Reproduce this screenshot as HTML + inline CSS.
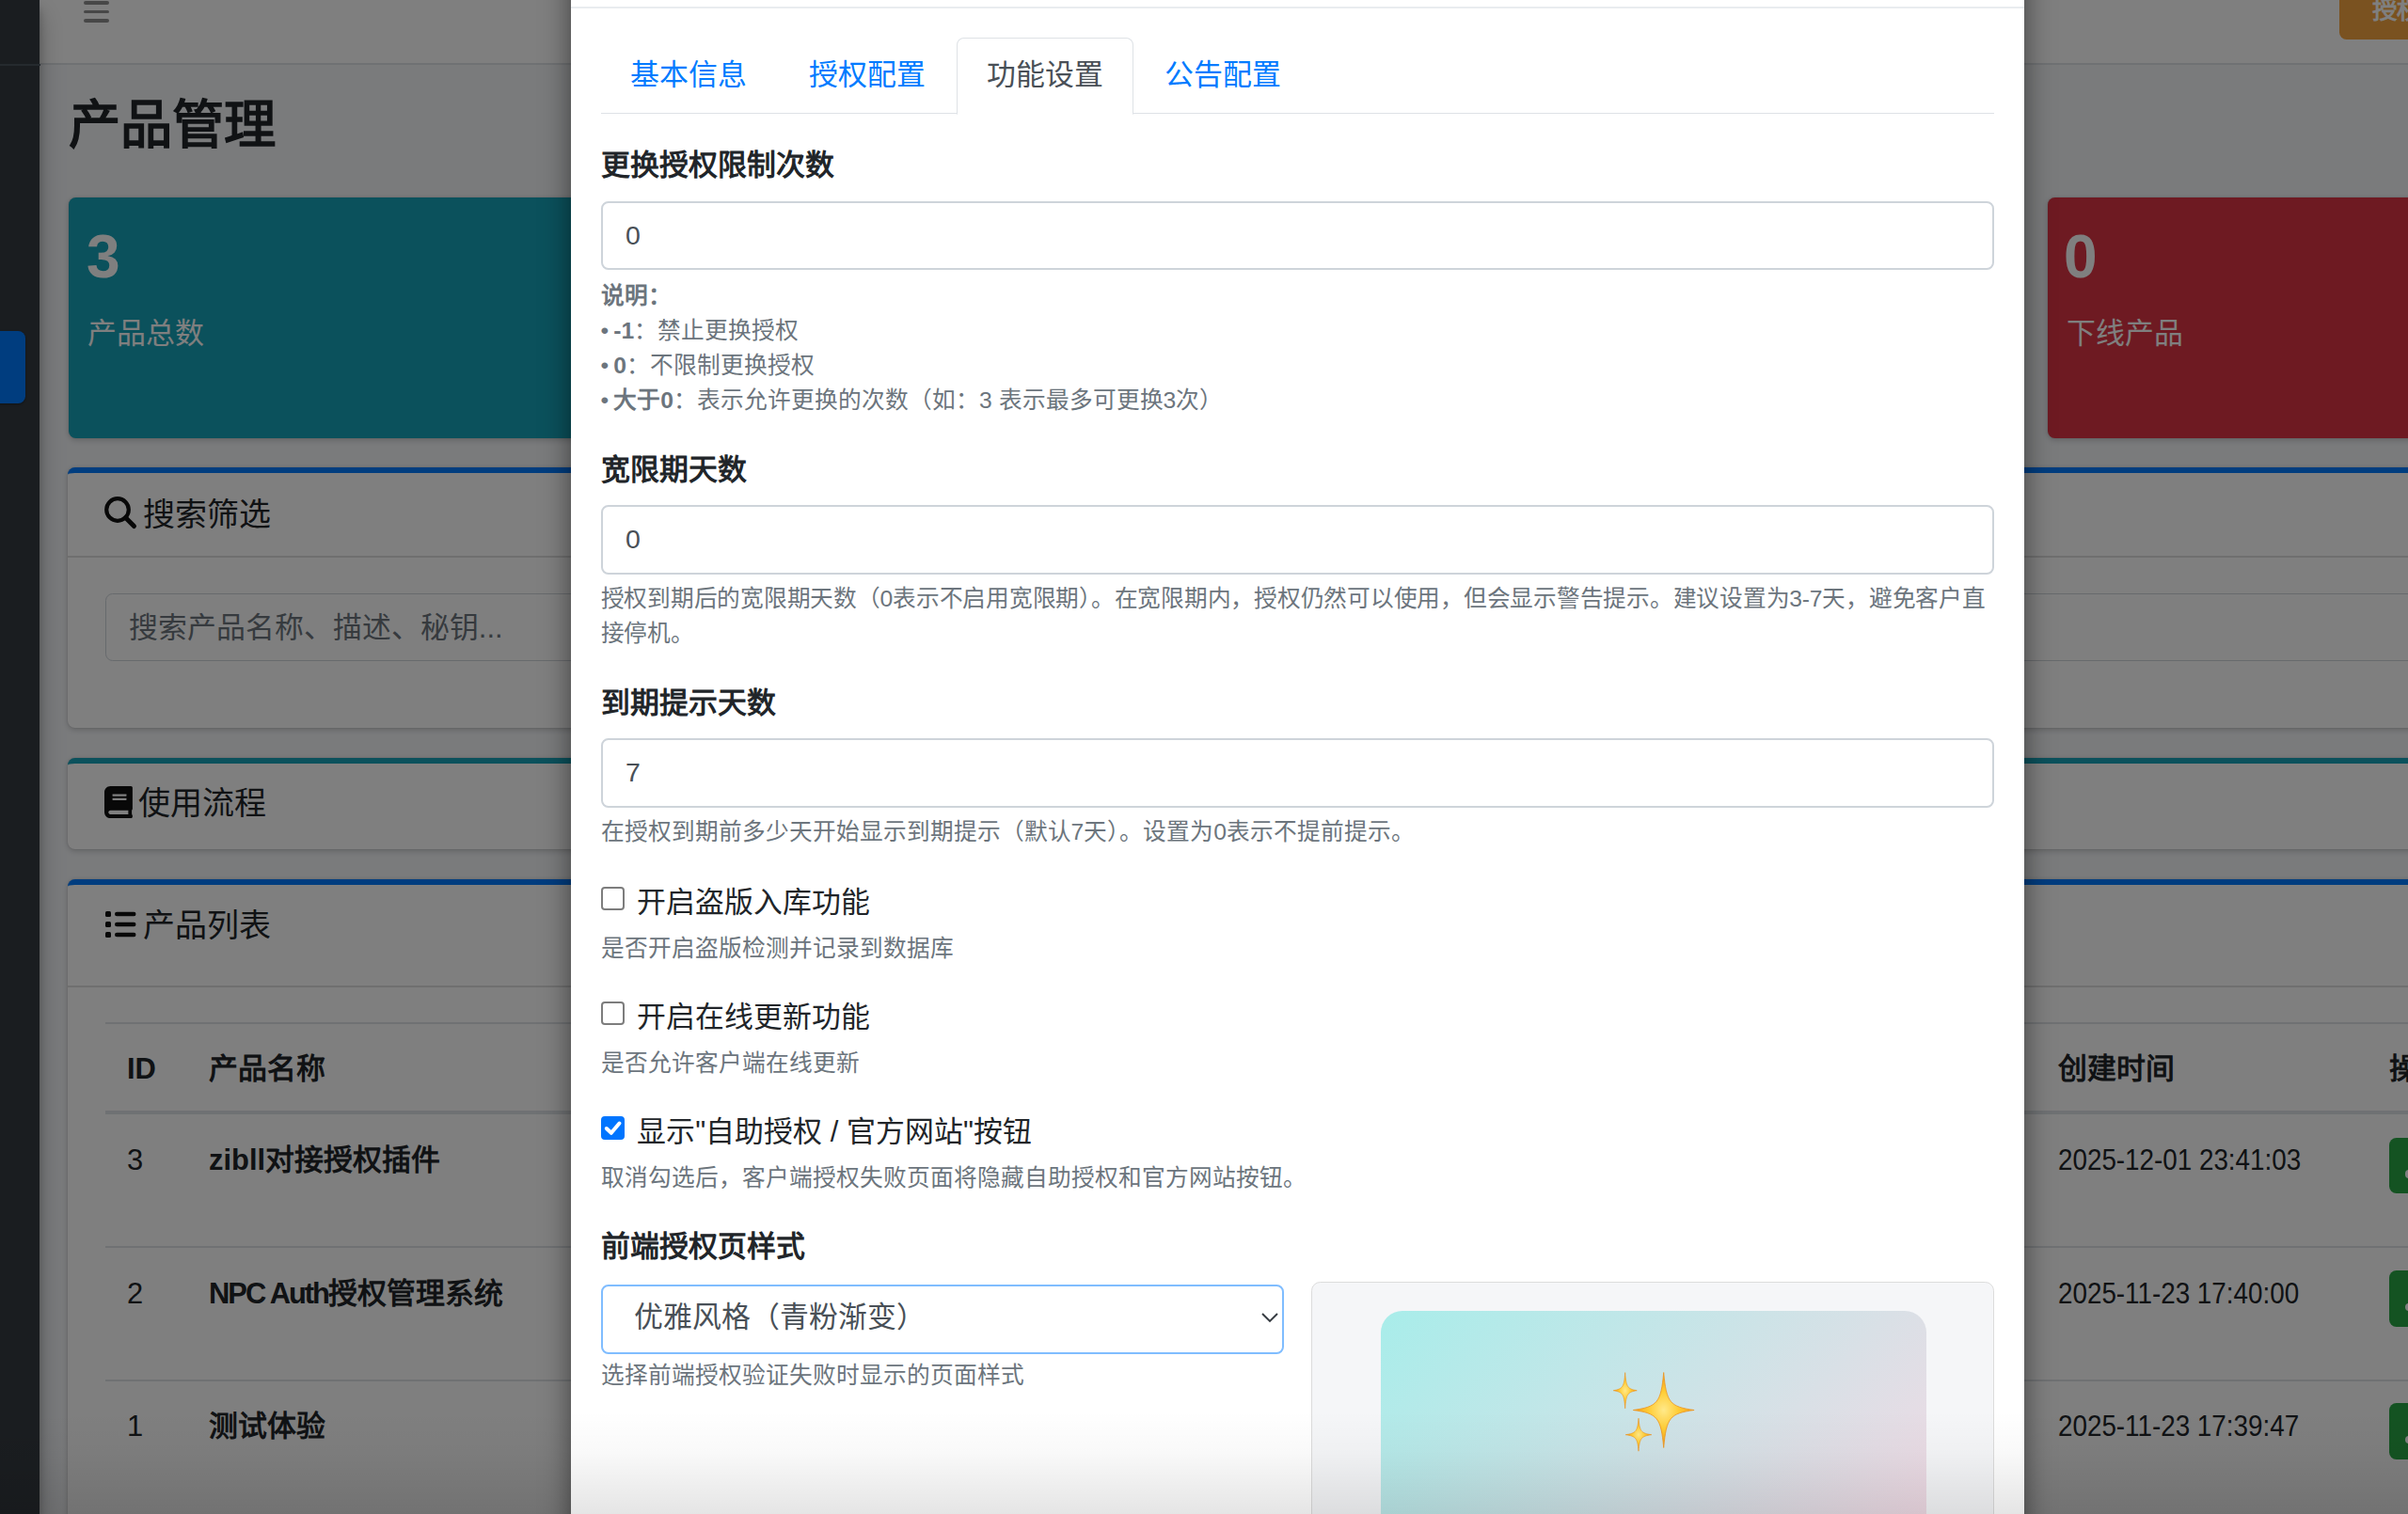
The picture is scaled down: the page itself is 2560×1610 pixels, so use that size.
<!DOCTYPE html>
<html lang="zh-CN">
<head>
<meta charset="utf-8">
<title>产品管理</title>
<style>
html,body{margin:0;padding:0;width:2560px;height:1610px;overflow:hidden;}
body{font-family:"Liberation Sans",sans-serif;background:#f4f6f9;position:relative;color:#212529;font-size:30.9px;line-height:46.35px;}
.a{position:absolute;}
/* background page */
#sidebar{left:0;top:0;width:42.2px;height:1610px;background:#343a40;box-shadow:0 14px 28px rgba(0,0,0,.25),0 10px 10px rgba(0,0,0,.22);z-index:2;}
#sidebar .brandline{position:absolute;left:0;top:67.5px;width:42.5px;height:2px;background:#4b545c;}
#sidebar .active{position:absolute;left:-20px;top:351.5px;width:47px;height:77px;background:#007bff;border-radius:7.7px;box-shadow:0 1px 3px rgba(0,0,0,.12),0 1px 2px rgba(0,0,0,.24);}
#navbar{left:42.5px;top:0;width:2517.5px;height:67px;background:#fff;border-bottom:2px solid #dee2e6;z-index:1;}
.burger{position:absolute;left:46.5px;width:27px;height:3.8px;border-radius:2px;background:#8f8f8f;}
#warnbtn{z-index:3;left:2486.5px;top:-20px;width:200px;height:61.5px;background:#f4a440;border-radius:7.7px;color:#fff;}
#warnbtn span{position:absolute;left:35.5px;top:20.5px;font-size:26.5px;line-height:20px;font-weight:700;}
#title{left:73px;top:99.5px;font-size:55.3px;line-height:67px;font-weight:700;color:#212529;white-space:nowrap;}
.smallbox{top:210px;height:255.6px;border-radius:7.7px;box-shadow:0 0 2px rgba(0,0,0,.125),0 2px 6px rgba(0,0,0,.2);color:#fff;}
.smallbox .num{position:absolute;left:19px;top:17.5px;font-size:64px;line-height:90px;font-weight:700;}
.smallbox .slbl{position:absolute;left:20px;top:122px;font-size:30.9px;line-height:46px;}
.card{left:72.2px;width:2800px;background:#fff;border-radius:7.7px;box-shadow:0 0 2px rgba(0,0,0,.125),0 2px 6px rgba(0,0,0,.2);border-top:6.2px solid #007bff;}
.card .hd{position:absolute;left:0;top:0;width:100%;border-bottom:2px solid rgba(0,0,0,.125);}
.card .ht{position:absolute;left:80px;font-size:34px;line-height:46px;white-space:nowrap;}
.th{position:absolute;font-weight:700;white-space:nowrap;}
.td{position:absolute;white-space:nowrap;}
.nar{display:inline-block;transform:scaleX(0.9);transform-origin:0 0;}
.hline{position:absolute;left:111.5px;width:2800px;height:2px;background:#dee2e6;}
.gbtn{position:absolute;left:2539.7px;width:80px;height:59.5px;background:#28a745;border-radius:7.7px;}
.gbtn:after{content:"";position:absolute;left:17px;top:34.8px;width:8.4px;height:8.4px;border-radius:50%;background:#fff;}

.ico{position:absolute;}
.sinput{left:111.8px;top:631.4px;width:2800px;height:72.1px;box-sizing:border-box;border:1.93px solid #ced4da;border-radius:7.7px;background:#fff;z-index:1;}
.sinput span{position:absolute;left:24px;top:2px;line-height:68px;color:#6c757d;font-size:30.9px;}
#overlay{left:0;top:0;width:2560px;height:1610px;background:rgba(0,0,0,.5);z-index:10;}
/* modal */
#modal{left:607.3px;top:-200px;width:1544.6px;height:2200px;background:#fff;border-radius:9.6px;box-shadow:0 15.45px 30.9px rgba(0,0,0,.5);z-index:11;}

#mb{left:638.6px;top:40.4px;width:1481.6px;z-index:12;}
.tabs{position:relative;height:79.2px;border-bottom:1.93px solid #dee2e6;margin:0;padding:0;}
.tab{position:absolute;top:0;width:185.4px;height:77.2px;border:1.93px solid transparent;border-radius:7.7px 7.7px 0 0;color:#007bff;text-align:center;line-height:77.2px;}
.tab.act{color:#495057;border-color:#dee2e6 #dee2e6 #fff;background:#fff;height:79.2px;}
.tc{padding-top:32.5px;}
.fg{margin-bottom:30.9px;}
.lbl{display:block;font-weight:700;margin-bottom:15.45px;}
.fc{box-sizing:border-box;height:73.4px;border:2px solid #ced4da;border-radius:7.7px;padding:0 24.5px;color:#495057;line-height:69.4px;font-size:28.5px;position:relative;top:-1px;}
.ft{display:block;margin-top:6.2px;padding-bottom:1.5px;font-size:24.7px;line-height:37.1px;color:#6c757d;}
.ft b{font-weight:700;}
.fchk{position:relative;padding-left:38.6px;}
.cb{position:absolute;left:0px;top:6px;box-sizing:border-box;width:25.2px;height:25.2px;border:2px solid #7d7d7d;border-radius:4px;background:#fff;}
.cb.on{background:#0075ff;border-color:#0075ff;}
.row{position:relative;height:500px;}
.sel{position:absolute;left:0;top:1.5px;box-sizing:border-box;width:726px;height:73.4px;border:2px solid #80bdff;border-radius:7.7px;color:#495057;padding-left:33px;line-height:66px;}
.prev{position:absolute;left:755.6px;top:-1.7px;box-sizing:border-box;width:726px;height:600px;background:#f5f6f8;border:1.93px solid #dcdcdc;border-radius:9.6px;}
.pcard{position:absolute;left:73px;top:30px;width:580px;height:380px;border-radius:23px;background:linear-gradient(135deg,#a8edea 0%,#fed6e3 100%);}
#fade{left:0;top:1500px;width:2560px;height:110px;background:linear-gradient(to bottom,rgba(0,0,0,0) 0%,rgba(0,0,0,.025) 40%,rgba(0,0,0,.1) 100%);z-index:20;}
</style>
</head>
<body>
<div id="sidebar" class="a"><div class="brandline"></div><div class="active"></div></div>
<div id="navbar" class="a">
  <div class="burger" style="top:1px"></div>
  <div class="burger" style="top:10.6px"></div>
  <div class="burger" style="top:20.2px"></div>
</div>
<div id="warnbtn" class="a"><span>授权</span></div>
<div id="title" class="a">产品管理</div>
<div class="a smallbox" style="left:73px;width:672px;background:#17a2b8;"><div class="num">3</div><div class="slbl">产品总数</div></div>
<div class="a smallbox" style="left:2177px;width:672px;background:#dc3545;"><div class="num" style="left:17px">0</div><div class="slbl">下线产品</div></div>

<div class="a card" style="top:497px;height:270.7px;">
  <div class="hd" style="height:88px;"></div>
  <div class="ht" style="top:21px;">搜索筛选</div>
</div>
<div class="a card" style="top:805.5px;height:91.7px;border-top-color:#17a2b8;">
  <div class="ht" style="top:19.5px;left:75px">使用流程</div>
</div>
<div class="a card" style="top:935px;height:900px;">
  <div class="hd" style="height:106.5px;"></div>
  <div class="ht" style="top:20px;">产品列表</div>
</div>


<div class="a sinput"><span>搜索产品名称、描述、秘钥...</span></div>
<svg class="a" style="left:108px;top:526px;z-index:1" width="40" height="40" viewBox="0 0 40 40"><circle cx="17" cy="16" r="11.8" fill="none" stroke="#111" stroke-width="4.2"/><path d="M25.5 24.5 L34.5 33.5" stroke="#111" stroke-width="5" stroke-linecap="round"/></svg>
<svg class="a" style="left:111.1px;top:836px;z-index:1" width="29.9" height="34.2" viewBox="0 0 448 512"><path fill="#111" d="M448 360V24c0-13.3-10.7-24-24-24H96C43 0 0 43 0 96v320c0 53 43 96 96 96h328c13.3 0 24-10.7 24-24v-16c0-7.5-3.5-14.3-8.9-18.7-4.2-15.4-4.2-59.3 0-74.7 5.4-4.3 8.9-11.1 8.9-18.6zM128 134c0-3.3 2.7-6 6-6h212c3.3 0 6 2.7 6 6v20c0 3.3-2.7 6-6 6H134c-3.3 0-6-2.7-6-6v-20zm0 64c0-3.3 2.7-6 6-6h212c3.3 0 6 2.7 6 6v20c0 3.3-2.7 6-6 6H134c-3.3 0-6-2.7-6-6v-20zm253.4 250H96c-17.7 0-32-14.3-32-32 0-17.6 14.4-32 32-32h285.4c-1.9 17.1-1.9 46.9 0 64z"/></svg>
<svg class="a" style="left:112px;top:969px;z-index:1" width="33" height="28" viewBox="0 0 33 28"><rect x="0" y="0" width="6" height="6" rx="1.5" fill="#111"/><rect x="0" y="11" width="6" height="6" rx="1.5" fill="#111"/><rect x="0" y="22" width="6" height="6" rx="1.5" fill="#111"/><rect x="10" y="0.8" width="22.5" height="4.4" rx="2.2" fill="#111"/><rect x="10" y="11.8" width="22.5" height="4.4" rx="2.2" fill="#111"/><rect x="10" y="22.8" width="22.5" height="4.4" rx="2.2" fill="#111"/></svg>
<div class="hline" style="top:1087px;z-index:1"></div>
<div class="th" style="left:135px;top:1114px;z-index:1">ID</div>
<div class="th" style="left:222px;top:1114px;z-index:1">产品名称</div>
<div class="th" style="left:2188px;top:1114px;z-index:1">创建时间</div>
<div class="th" style="left:2540px;top:1114px;z-index:1">操作</div>
<div class="hline" style="top:1181px;height:3.9px;z-index:1"></div>
<div class="td" style="left:135px;top:1211px;z-index:1">3</div>
<div class="th" style="left:222px;top:1211px;z-index:1">zibll对接授权插件</div>
<div class="td" style="left:2188px;top:1211px;z-index:1"><span class="nar">2025-12-01 23:41:03</span></div>
<div class="gbtn" style="top:1209.5px;z-index:1"></div>
<div class="hline" style="top:1325px;z-index:1"></div>
<div class="td" style="left:135px;top:1353px;z-index:1">2</div>
<div class="th" style="left:222px;top:1353px;z-index:1"><span class="nar" style="transform:none;letter-spacing:-2px">NPC Auth</span>授权管理系统</div>
<div class="td" style="left:2188px;top:1353px;z-index:1"><span class="nar">2025-11-23 17:40:00</span></div>
<div class="gbtn" style="top:1351px;z-index:1"></div>
<div class="hline" style="top:1466.5px;z-index:1"></div>
<div class="td" style="left:135px;top:1494px;z-index:1">1</div>
<div class="th" style="left:222px;top:1494px;z-index:1">测试体验</div>
<div class="td" style="left:2188px;top:1494px;z-index:1"><span class="nar">2025-11-23 17:39:47</span></div>
<div class="gbtn" style="top:1492px;z-index:1"></div>
<div id="overlay" class="a"></div>
<div id="modal" class="a"><div style="position:absolute;left:0;top:207px;width:100%;height:1.93px;background:#e9ecef"></div></div>
<div id="mb" class="a">
  <div class="tabs">
    <div class="tab" style="left:0">基本信息</div>
    <div class="tab" style="left:189.3px">授权配置</div>
    <div class="tab act" style="left:378.6px">功能设置</div>
    <div class="tab" style="left:567.9px">公告配置</div>
  </div>
  <div class="tc">
    <div class="fg" style="margin-bottom:32.4px">
      <label class="lbl">更换授权限制次数</label>
      <div class="fc">0</div>
      <small class="ft" style="margin-top:7.7px;padding-bottom:0"><b>说明：</b><br>•&#8201;<b>-1</b>：禁止更换授权<br>•&#8201;<b>0</b>：不限制更换授权<br>•&#8201;<b>大于0</b>：表示允许更换的次数（如：3 表示最多可更换3次）</small>
    </div>
    <div class="fg">
      <label class="lbl">宽限期天数</label>
      <div class="fc">0</div>
      <small class="ft" style="white-space:nowrap;letter-spacing:-0.25px">授权到期后的宽限期天数（0表示不启用宽限期）。在宽限期内，授权仍然可以使用，但会显示警告提示。建议设置为3-7天，避免客户直<br>接停机。</small>
    </div>
    <div class="fg" style="margin-bottom:32.4px">
      <label class="lbl">到期提示天数</label>
      <div class="fc">7</div>
      <small class="ft">在授权到期前多少天开始显示到期提示（默认7天）。设置为0表示不提前提示。</small>
    </div>
    <div class="fg fchk">
      <div class="cb"></div>
      <div>开启盗版入库功能</div>
      <small class="ft" style="margin-left:-38.6px">是否开启盗版检测并记录到数据库</small>
    </div>
    <div class="fg fchk">
      <div class="cb"></div>
      <div>开启在线更新功能</div>
      <small class="ft" style="margin-left:-38.6px">是否允许客户端在线更新</small>
    </div>
    <div class="fg fchk">
      <div class="cb on"><svg width="21" height="21" viewBox="0 0 21 21" style="position:absolute;left:0;top:0"><path d="M3.8 11 L8.8 15.8 L17.5 5.5" fill="none" stroke="#fff" stroke-width="4" stroke-linecap="round" stroke-linejoin="round"/></svg></div>
      <div>显示"自助授权 / 官方网站"按钮</div>
      <small class="ft" style="margin-left:-38.6px">取消勾选后，客户端授权失败页面将隐藏自助授权和官方网站按钮。</small>
    </div>
    <label class="lbl">前端授权页样式</label>
    <div class="row">
      <div class="sel">优雅风格（青粉渐变）<svg width="20" height="14" viewBox="0 0 20 14" style="position:absolute;left:699px;top:25.5px"><path d="M2 3 L10 11 L18 3" fill="none" stroke="#343a40" stroke-width="1.9"/></svg></div>
      <small class="ft" style="position:absolute;top:73.4px;left:0">选择前端授权验证失败时显示的页面样式</small>
      <div class="prev"><div class="pcard"></div></div>
    </div>
  </div>
</div>
<svg class="a" style="left:1700px;top:1450px;z-index:13" width="120" height="110" viewBox="0 0 120 110"><defs><radialGradient id="sg" cx="50%" cy="50%" r="50%"><stop offset="0" stop-color="#ffe98a"/><stop offset="0.5" stop-color="#ffcc33"/><stop offset="1" stop-color="#f29a1a"/></radialGradient></defs><path d="M68.7 9.5 C71.6 41.5 75.2 45.9 101.1 49.5 C75.2 53.1 71.6 57.5 68.7 89.5 C65.8 57.5 62.2 53.1 36.3 49.5 C62.2 45.9 65.8 41.5 68.7 9.5 Z" fill="url(#sg)" stroke="#ec9420" stroke-width="0.8"/><path d="M27.7 9.6 C28.8 24.9 30.2 27.0 40.2 28.7 C30.2 30.4 28.8 32.5 27.7 47.8 C26.6 32.5 25.2 30.4 15.2 28.7 C25.2 27.0 26.6 24.9 27.7 9.6 Z" fill="url(#sg)" stroke="#ec9420" stroke-width="0.6"/><path d="M42.0 58.2 C43.2 72.2 44.8 74.1 55.8 75.7 C44.8 77.3 43.2 79.2 42.0 93.2 C40.8 79.2 39.2 77.3 28.2 75.7 C39.2 74.1 40.8 72.2 42.0 58.2 Z" fill="url(#sg)" stroke="#ec9420" stroke-width="0.6"/></svg>
<div id="fade" class="a"></div>
</body>
</html>
